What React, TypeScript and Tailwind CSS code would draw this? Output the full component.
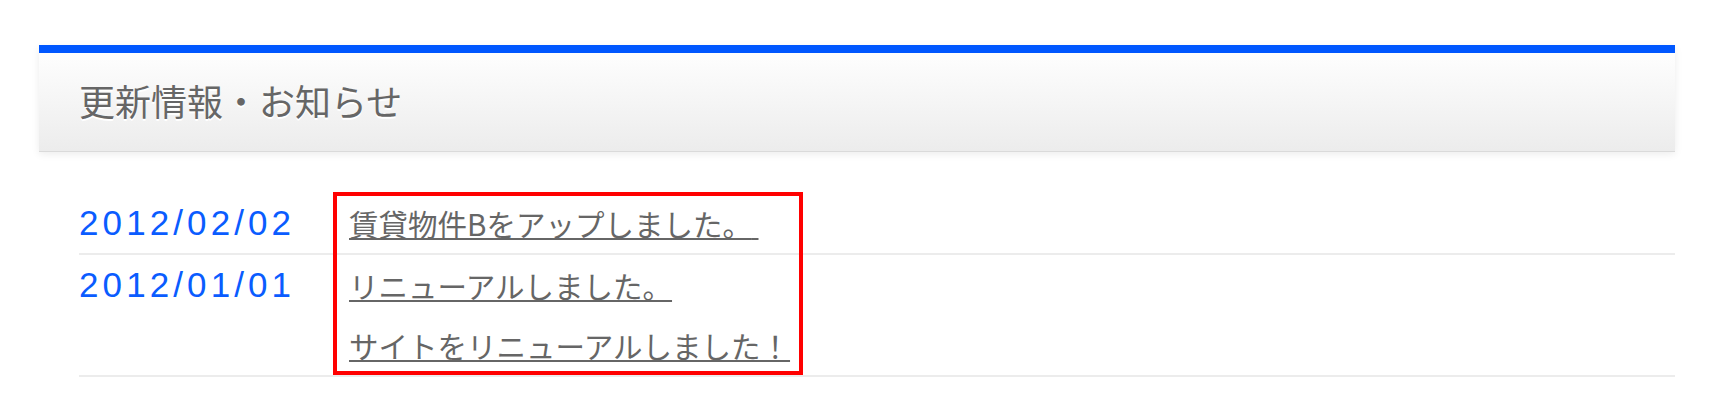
export default function App() {
  const cjk = "font-['Noto_Sans_CJK_JP','Noto_Sans',sans-serif]";
  const link =
    "block leading-[60px] text-[29.5px] text-[#666] underline decoration-2 decoration-[#666] underline-offset-[2px] whitespace-nowrap";
  const date =
    "w-[270px] shrink-0 leading-[60px] text-[35px] text-[#0a5cff] tracking-[4.1px] font-['Liberation_Sans',Arial,sans-serif]";
  return (
    <div className={`min-h-[420px] bg-white pt-[45px] pl-[39px] pr-[37px] ${cjk}`}>
      <div className="flex h-[106px] items-center border-t-8 border-[#0057ff] bg-gradient-to-b from-[#fefefe] to-[#ececec] pb-[4px] pl-[40px] shadow-[0_1px_0_#dadada,0_3px_8px_rgba(0,0,0,0.08)]">
        <h2 className="text-[36px] leading-none text-[#666] [text-shadow:0_2px_0_#fff]">更新情報・お知らせ</h2>
      </div>
      <div className="relative ml-[40px] mt-[42px]">
        <div className="flex h-[62px] border-b-2 border-[#ececec]">
          <div className={date}>2012/02/02</div>
          <div>
            <a className={link}>賃貸物件Bをアップしました。{"\u00a0"}</a>
          </div>
        </div>
        <div className="flex h-[122px] border-b-2 border-[#ececec]">
          <div className={date}>2012/01/01</div>
          <div>
            <a className={link}>リニューアルしました。</a>
            <a className={link}>サイトをリニューアルしました！</a>
          </div>
        </div>
        <div className="pointer-events-none absolute left-[254px] top-[-1px] h-[183px] w-[470px] border-4 border-[#ff0000]" />
      </div>
    </div>
  );
}
